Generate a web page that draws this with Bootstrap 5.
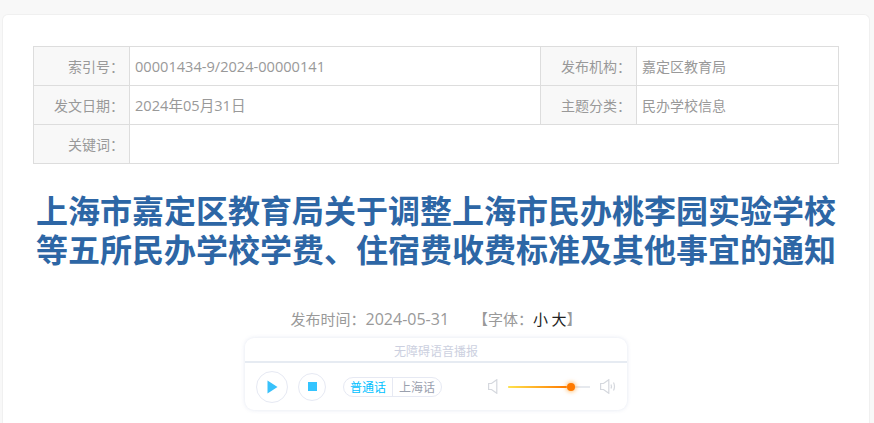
<!DOCTYPE html>
<html lang="zh-CN">
<head>
<meta charset="utf-8">
<title>通知</title>
<link href="https://cdn.jsdelivr.net/npm/bootstrap@5.3.0/dist/css/bootstrap.min.css" rel="stylesheet">
<style>
html,body{height:423px;overflow:hidden}
body{background:#f8f8f8;font-family:"Noto Sans CJK SC","Open Sans",sans-serif;color:#999}
.sheet{margin:14px 4px 0 2px;height:409px;background:#fff;border:1px solid #f0f0f0;border-bottom:0;border-radius:6px 6px 0 0;padding:31px 30px 0 30px}
.infotab{width:805px;table-layout:fixed;border-collapse:collapse;margin:0;font-size:14px;line-height:20px;color:#999}
.infotab th,.infotab td{border:1px solid #ddd;height:39px;padding:0 5px;font-weight:400;vertical-align:middle}
.infotab th{background:#f8f8f8;text-align:right;padding-right:5px}
.infotab .num{padding-left:5px;font-family:"Open Sans","Noto Sans CJK SC",sans-serif;font-size:14.6px}
.doc-title{margin:26px 0 0;width:806px;font-family:"Noto Sans CJK SC",sans-serif;font-size:32px;line-height:38.5px;font-weight:700;color:#2d66a5;text-align:center}
.meta{margin-top:41px;width:806px;font-size:15px;line-height:22px;text-align:center;color:#999}
.meta .num{font-family:"Open Sans","Noto Sans CJK SC",sans-serif;font-size:16px}
.meta .size{color:#222}
.player{width:382px;height:72px;margin:8px 0 0 212px;border-radius:9px;background:#fff;box-shadow:0 0 4px rgba(190,200,225,.45)}
.player-top{height:25px;border-bottom:2px solid #e6ebf2;font-size:12px;line-height:25px;text-align:center;color:#ccd0e0}
.player-main{height:47px;padding:0 11px}
.player-main>*{flex:none}
.circ{border:1px solid #e6e9f3;border-radius:50%;background:#fff}
.circ-a{width:32px;height:32px}
.circ-b{width:28px;height:28px;margin-left:10px}
.tabs{margin-left:17px;width:99px;height:20px;border:1px solid #e6e9f3;border-radius:10px;font-size:12px;line-height:18px}
.tabs span{flex:1;text-align:center}
.tabs .on{color:#00bfff;border-right:1px solid #e6e9f3}
.tabs .off{color:#9aa0ae}
.vol-lo{margin-left:46px}
.slider{width:82px;height:2px;margin:0 10px;background:#e6e9ee}
.slider-fill{height:2px;background:linear-gradient(90deg,#ffe34d,#ff7a00);border-radius:1px}
.knob{width:8px;height:8px;border-radius:50%;background:#ff7a00;box-shadow:0 0 4px 1px rgba(255,140,0,.55);flex:none;margin-top:-3px;margin-right:-4px}
</style>
</head>
<body>
<div class="sheet">
  <table class="infotab">
    <colgroup><col style="width:96px"><col style="width:411px"><col style="width:96px"><col style="width:202px"></colgroup>
    <tr><th>索引号：</th><td class="num">00001434-9/2024-00000141</td><th>发布机构：</th><td>嘉定区教育局</td></tr>
    <tr><th>发文日期：</th><td class="num">2024年05月31日</td><th>主题分类：</th><td>民办学校信息</td></tr>
    <tr><th>关键词：</th><td colspan="3"></td></tr>
  </table>
  <h1 class="doc-title">上海市嘉定区教育局关于调整上海市民办桃李园实验学校<br>等五所民办学校学费、住宿费收费标准及其他事宜的通知</h1>
  <div class="meta">发布时间：<span class="num">2024-05-31</span><span class="ms-4">【字体：<span class="size">小 大</span>】</span></div>
  <div class="player">
    <div class="player-top">无障碍语音播报</div>
    <div class="player-main d-flex align-items-center">
      <div class="circ circ-a d-flex align-items-center justify-content-center">
        <svg width="11" height="14" viewBox="0 0 11 14"><path d="M0.5 0.5L10.5 7L0.5 13.5Z" fill="#38c1fb"/></svg>
      </div>
      <div class="circ circ-b d-flex align-items-center justify-content-center">
        <svg width="9" height="9" viewBox="0 0 9 9"><rect width="9" height="9" fill="#33c4ff"/></svg>
      </div>
      <div class="tabs d-flex"><span class="on">普通话</span><span class="off">上海话</span></div>
      <svg class="vol-lo" width="10" height="15" viewBox="0 0 10 15" fill="none" stroke="#d5d8de" stroke-width="1.2"><path d="M0.6 4.5H3.5L8.8 0.7V14.3L3.5 10.5H0.6Z"/></svg>
      <div class="slider"><div class="d-flex" style="width:63px"><div class="slider-fill flex-grow-1"></div><div class="knob"></div></div></div>
      <svg width="16" height="15" viewBox="0 0 16 15" fill="none" stroke="#d5d8de" stroke-width="1.2"><path d="M0.6 4.5H3.5L8.8 0.7V14.3L3.5 10.5H0.6Z"/><path d="M11 5.5Q12 7.5 11 9.5"/><path d="M13.5 3.5Q15.5 7.5 13.5 11.5"/></svg>
    </div>
  </div>
</div>
</body>
</html>
